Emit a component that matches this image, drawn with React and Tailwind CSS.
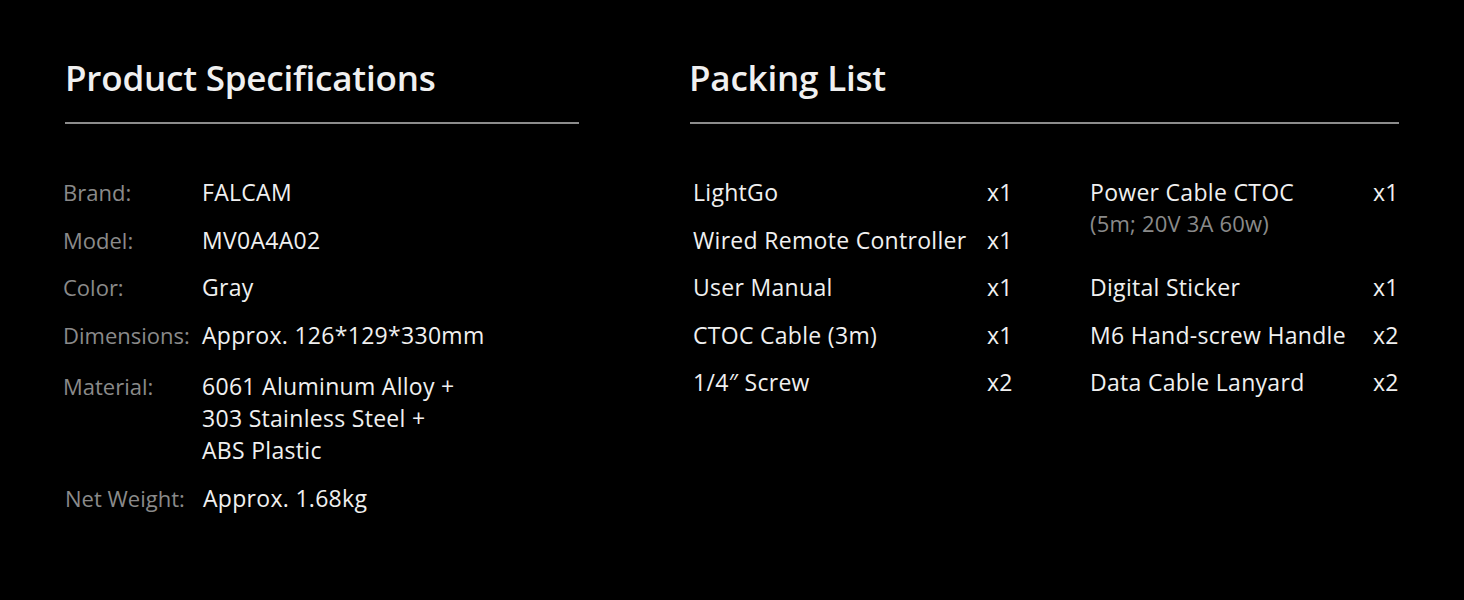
import React from "react";

const specs = [
  ["Brand:", "FALCAM"],
  ["Model:", "MV0A4A02"],
  ["Color:", "Gray"],
  ["Dimensions:", "Approx. 126*129*330mm"],
];

const col1 = [
  ["LightGo", "x1"],
  ["Wired Remote Controller", "x1"],
  ["User Manual", "x1"],
  ["CTOC Cable (3m)", "x1"],
  ["1/4\u2033 Screw", "x2"],
];

export default function App() {
  return (
    <div
      className="w-[1464px] h-[600px] bg-black flex text-[#f0f0f0] overflow-hidden"
      style={{ fontFamily: '"Open Sans", sans-serif' }}
    >
      {/* Left */}
      <div className="ml-[65px] w-[514px] pt-[56px]">
        <h2 className="text-[35px] leading-[44px] font-semibold tracking-[-0.2px]">Product Specifications</h2>
        <div className="mt-[22px] h-[2px] bg-[#8c8c8c]" />
        <div className="mt-[52px] -ml-[2px] text-[23px] leading-[32px] tracking-[0.3px]">
          {specs.map(([k, v]) => (
            <div key={k} className="flex h-[47.5px]">
              <div className="w-[139px] text-[22px] text-[#8a8a8a] tracking-[0px]">{k}</div>
              <div>{v}</div>
            </div>
          ))}
          <div className="flex mt-[4px]">
            <div className="w-[139px] text-[22px] text-[#8a8a8a] tracking-[0px]">Material:</div>
            <div>
              <div>6061 Aluminum Alloy +</div>
              <div>303 Stainless Steel +</div>
              <div>ABS Plastic</div>
            </div>
          </div>
          <div className="flex mt-[16px] ml-[2px]">
            <div className="w-[138px] text-[22px] text-[#8a8a8a] tracking-[0px]">Net Weight:</div>
            <div>Approx. 1.68kg</div>
          </div>
        </div>
      </div>

      {/* Right */}
      <div className="ml-[111px] w-[709px] pt-[56px]">
        <h2 className="-ml-[1px] text-[35px] leading-[44px] font-semibold tracking-[-0.2px]">Packing List</h2>
        <div className="mt-[22px] h-[2px] bg-[#8c8c8c]" />
        <div className="mt-[52px] flex text-[23px] leading-[32px] tracking-[0.3px]">
          <div className="ml-[3px] w-[397px]">
            {col1.map(([n, q]) => (
              <div key={n} className="flex h-[47.5px]">
                <div className="w-[294px]">{n}</div>
                <div>{q}</div>
              </div>
            ))}
          </div>
          <div>
            <div className="flex h-[95px]">
              <div className="w-[283px]">
                <div>Power Cable CTOC</div>
                <div className="text-[22px] leading-[30px] text-[#8a8a8a] tracking-[0.2px]">(5m; 20V 3A 60w)</div>
              </div>
              <div>x1</div>
            </div>
            {[
              ["Digital Sticker", "x1"],
              ["M6 Hand-screw Handle", "x2"],
              ["Data Cable Lanyard", "x2"],
            ].map(([n, q]) => (
              <div key={n} className="flex h-[47.5px]">
                <div className="w-[283px]">{n}</div>
                <div>{q}</div>
              </div>
            ))}
          </div>
        </div>
      </div>
    </div>
  );
}
